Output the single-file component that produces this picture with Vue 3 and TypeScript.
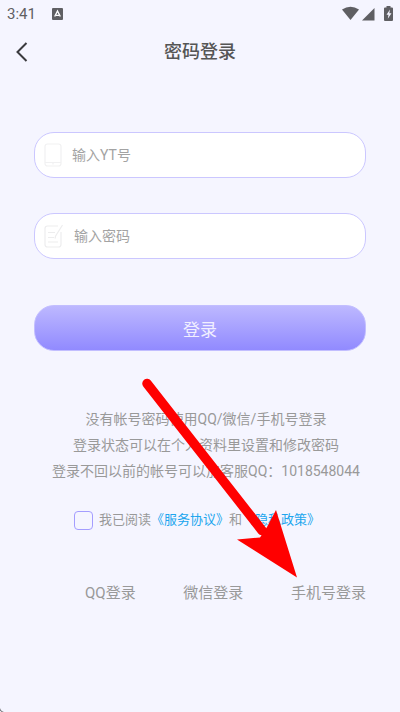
<script setup lang="ts">
import { ref } from 'vue'

const account = ref('')
const password = ref('')
const agreed = ref(false)
const hints: string[] = [
  '没有帐号密码使用QQ/微信/手机号登录',
  '登录状态可以在个人资料里设置和修改密码',
  '登录不回以前的帐号可以加客服QQ：1018548044',
]
const methods: string[] = ['QQ登录', '微信登录', '手机号登录']
</script>

<template>
  <div class="page">
    <div class="status">
      <span class="time">3:41</span>
      <svg class="app-icon" width="11" height="12" viewBox="0 0 11 12">
        <rect width="11" height="12" rx="1" fill="#5f5f63" />
        <path d="M2.7 8.5 5.5 3l2.8 5.5M4 7.4h3" fill="none" stroke="#fff" stroke-width="1.4" />
      </svg>
      <svg width="52" height="16" viewBox="0 0 52 16" fill="#5f5f63">
        <path d="M0 3.500Q8.500 -2 17 3.500L8.500 14Z" />
        <path d="M20 14.500 32.500 2V14.500Z" />
        <path d="M44.500 0h4v1.500h1.500q1 0 1 1v11.500q0 1-1 1h-7q-1 0-1-1V2.500q0-1 1-1h1.500z" />
        <path d="M48 3.500 44.500 8.700h2l-.7 4L49.500 7.200h-2.200z" fill="#f5f5ff" />
      </svg>
    </div>

    <header class="header">
      <button class="back" type="button" aria-label="返回">
        <svg width="12" height="20" viewBox="0 0 12 20">
          <path d="M10.500 1 1.500 10l9 9" fill="none" stroke="#3a3a3e" stroke-width="2" />
        </svg>
      </button>
      <h1>密码登录</h1>
    </header>

    <form class="form" @submit.prevent>
      <label class="field">
        <svg width="18" height="24" viewBox="0 0 18 24" fill="none" stroke="#f1f1f2" stroke-width="1.200">
          <rect x="1" y="1" width="16" height="22" rx="2.500" />
          <path d="M1 19.500h16M9 19.500v2" />
        </svg>
        <input v-model="account" type="text" placeholder="输入YT号" aria-label="输入YT号" />
      </label>
      <label class="field password">
        <svg width="20" height="24" viewBox="0 0 20 24" fill="none" stroke="#ededee" stroke-width="1.200">
          <path d="M14 2H3.500Q1 2 1 4.500v16Q1 23 3.500 23h11q2.500 0 2.500-2.500V8M4 8.500h7M4 13.500h6M4 18h10M18.500 1l-7.200 11.500M11 14.500l.5-2" />
        </svg>
        <input v-model="password" type="password" placeholder="输入密码" aria-label="输入密码" />
      </label>
      <button class="submit" type="submit">登录</button>
    </form>

    <div class="hints">
      <p v-for="line in hints" :key="line">{{ line }}</p>
    </div>

    <div class="agree">
      <input id="agree" v-model="agreed" type="checkbox" />
      <label for="agree">我已阅读</label>
      <a href="#service">《服务协议》</a>
      <span>和</span>
      <a href="#privacy">《隐私政策》</a>
    </div>

    <nav class="methods">
      <button v-for="name in methods" :key="name" type="button">{{ name }}</button>
    </nav>

    <svg class="arrow" width="160" height="202" viewBox="140 376 160 202" aria-hidden="true">
      <path d="M147 383.500 262 530.500" stroke="#f00" stroke-width="9.500" stroke-linecap="round" />
      <path d="M297 577.500 237 539.500l23-2 7-10.500 9-17z" fill="#f00" />
    </svg>
    <svg class="corner" width="4" height="4" viewBox="0 0 4 4" aria-hidden="true">
      <path d="M0 0q.5 3 4 4H2Q0 3 0 2z" fill="#555" />
    </svg>
  </div>
</template>

<style>
body {
  background: #f5f5ff;
}
</style>

<style scoped>
.page {
  position: relative;
  box-sizing: border-box;
  min-height: 100vh;
  background: #f5f5ff;
  color: #999;
  font-family: Roboto, "Noto Sans CJK SC", sans-serif;
}

button,
input {
  font-family: inherit;
}

button {
  padding: 0;
  border: 0;
  background: none;
  color: inherit;
}

.status {
  display: flex;
  align-items: center;
  height: 28px;
  padding: 0 6px 0 7px;
}

.time {
  color: #5f5f63;
  font-size: 15px;
}

.app-icon {
  margin: 0 auto 0 16px;
}

.header {
  display: grid;
  grid-template-columns: 32px 1fr 32px;
  align-items: center;
  height: 48px;
  padding: 0 8px;
}

.back {
  display: flex;
  justify-content: flex-end;
  padding-right: 12px;
}

h1 {
  margin: 0;
  color: #555;
  font-size: 18px;
  font-weight: 500;
  line-height: 24px;
  text-align: center;
}

.form {
  display: flex;
  flex-direction: column;
  padding: 56px 34px 0;
}

.field {
  display: flex;
  align-items: center;
  gap: 10px;
  box-sizing: border-box;
  height: 46px;
  padding: 0 16px 0 9px;
  border: 1px solid #cbc7ff;
  border-radius: 20px;
  background: #fff;
}

.password {
  margin-top: 35px;
}

.field input {
  flex: 1;
  min-width: 0;
  padding: 0;
  border: 0;
  outline: 0;
  background: none;
  color: #666;
  font-size: 14px;
  line-height: 20px;
}

.field input::placeholder {
  color: #a3a3a3;
}

.submit {
  height: 46px;
  margin-top: 46px;
  border: 1px solid #c2beff;
  border-radius: 20px;
  background: linear-gradient(#bdb8ff, #918aff);
  color: #f1efff;
  font-size: 17px;
}

.hints {
  padding: 55px 16px 0 28px;
  font-size: 14px;
  line-height: 26px;
  text-align: center;
}

.hints p {
  margin: 0;
}

.agree {
  display: flex;
  align-items: center;
  padding: 26px 34px 0 74px;
  font-size: 13px;
  line-height: 20px;
  white-space: nowrap;
}

.agree input {
  appearance: none;
  box-sizing: border-box;
  width: 19px;
  height: 19px;
  margin: 0 6px 0 0;
  border: 1px solid #a49dff;
  border-radius: 4px;
}

.agree input:checked {
  background: #918aff;
}

.agree a {
  color: #20a5ee;
  text-decoration: none;
}

.methods {
  display: flex;
  justify-content: space-between;
  padding: 51px 34px 0 85px;
}

.methods button {
  font-size: 15px;
  line-height: 24px;
}

.arrow {
  position: absolute;
  top: 376px;
  left: 140px;
  pointer-events: none;
}

.corner {
  position: absolute;
  bottom: 0;
  left: 0;
}
</style>
